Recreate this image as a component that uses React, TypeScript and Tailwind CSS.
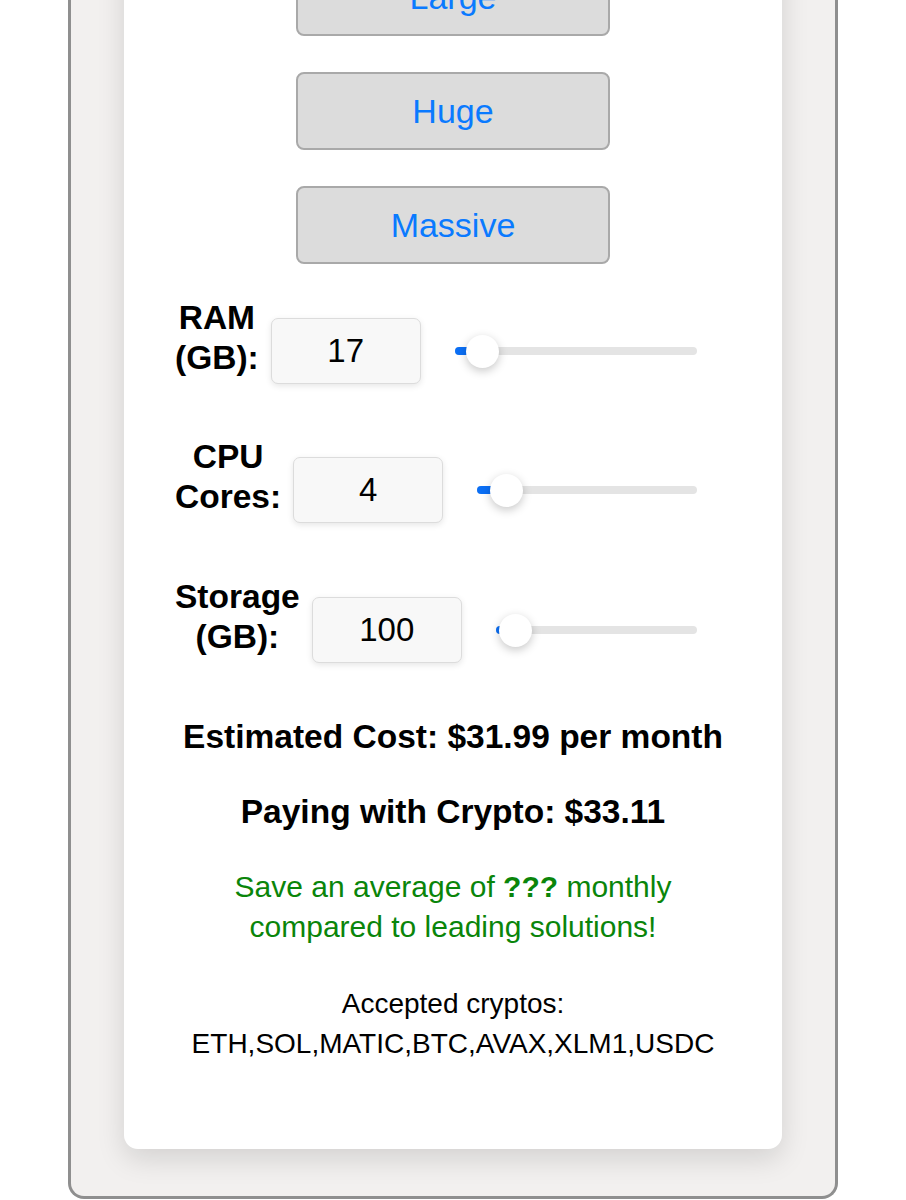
import React from 'react';

interface SpecRowProps {
    lines: [string, string];
    value: string;
    thumbAt: number;
    className?: string;
}

function SpecRow({ lines, value, thumbAt, className }: SpecRowProps) {
    return (
        <div className={`flex items-center pl-[51px] pr-[85px] ${className ?? ''}`}>
            {/* Label, two lines */}
            <div className="text-center font-bold text-[33.5px] leading-[40px] text-black mb-[26px]">
                <div>{lines[0]}</div>
                <div>{lines[1]}</div>
            </div>

            {/* Value box */}
            <div className="ml-[12px] w-[150px] h-[66px] shrink-0 flex items-center justify-center rounded-[7px] border border-[#dcdcdc] bg-[#f8f8f8] shadow-[0_2px_6px_rgba(0,0,0,0.10)] text-[33px] text-black">
                {value}
            </div>

            {/* Slider */}
            <div className="relative ml-[34px] flex-1 h-[34px] flex items-center">
                <div className="w-full h-[8px] rounded-full bg-[#e4e4e4]" />
                <div
                    className="absolute left-0 h-[8px] rounded-full bg-[#0b6ff5]"
                    style={{ width: thumbAt }}
                />
                <div
                    className="absolute w-[33px] h-[33px] rounded-full bg-white shadow-[0_3px_10px_rgba(0,0,0,0.22)]"
                    style={{ left: thumbAt - 16.5 }}
                />
            </div>
        </div>
    );
}

function SizeButton({ label, className }: { label: string; className?: string }) {
    return (
        <button
            className={`w-[314px] h-[78px] rounded-[8px] border-2 border-[#a9a9a9] bg-[#dcdcdc] text-[34px] text-[#0a7aff] ${className ?? ''}`}
        >
            {label}
        </button>
    );
}

export default function App() {
    return (
        <div className="w-full h-[1200px] overflow-hidden bg-white font-['Liberation_Sans',Arial,sans-serif]">
            <div className="mx-auto -mt-[60px] w-[770px] border-x-[3px] border-b-[3px] border-[#8f8f8f] rounded-b-[16px] bg-[#f2f0ef] px-[53px] pb-[47px]">
                <div className="bg-white rounded-b-[14px] shadow-[0_10px_28px_rgba(0,0,0,0.13)] pt-[18px] pb-[85px]">
                    {/* Size presets */}
                    <div className="flex flex-col items-center gap-[36px]">
                        <SizeButton label="Large" />
                        <SizeButton label="Huge" />
                        <SizeButton label="Massive" />
                    </div>

                    {/* Spec sliders */}
                    <SpecRow className="mt-[34px]" lines={['RAM', '(GB):']} value="17" thumbAt={28} />
                    <SpecRow className="mt-[33px]" lines={['CPU', 'Cores:']} value="4" thumbAt={29} />
                    <SpecRow className="mt-[34px]" lines={['Storage', '(GB):']} value="100" thumbAt={20} />

                    {/* Cost summary */}
                    <div className="mt-[34px] text-center font-bold text-[33.5px] leading-[40px] text-black">
                        Estimated Cost: $31.99 per month
                    </div>
                    <div className="mt-[35px] text-center font-bold text-[33.5px] leading-[40px] text-black">
                        Paying with Crypto: $33.11
                    </div>

                    <div className="mt-[35px] text-center text-[30px] leading-[40px] text-[#0a850a]">
                        Save an average of <span className="font-bold">???</span> monthly
                        <br />
                        compared to leading solutions!
                    </div>

                    <div className="mt-[37px] text-center text-[28px] leading-[40px] text-black">
                        Accepted cryptos:
                        <br />
                        ETH,SOL,MATIC,BTC,AVAX,XLM1,USDC
                    </div>
                </div>
            </div>
        </div>
    );
}
